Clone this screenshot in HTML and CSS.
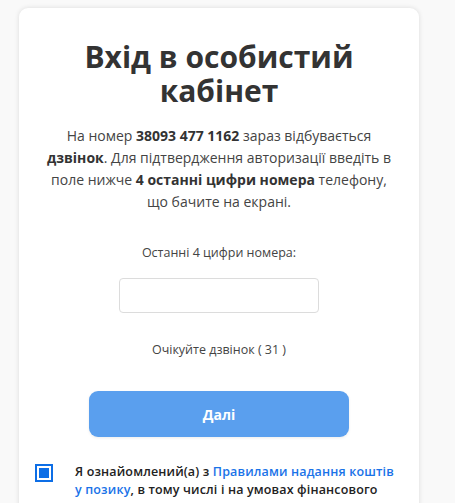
FILE: index.html
```html
<!DOCTYPE html>
<html lang="uk">
<head>
<meta charset="utf-8">
<link rel="stylesheet" href="styles.css">
</head>
<body>
<div class="card">
  <h1 class="title">Вхід в особистий кабінет</h1>
  <p class="info">На номер <b>38093 477 1162</b> зараз відбувається <b>дзвінок</b>. Для підтвердження авторизації введіть в поле нижче <b>4 останні цифри номера</b> телефону, що бачите на екрані.</p>
  <label class="field-label" for="code">Останні 4 цифри номера:</label>
  <input class="code-input" id="code" type="text">
  <p class="wait">Очікуйте дзвінок ( 31 )</p>
  <button class="btn" type="button">Далі</button>
  <div class="agree">
    <span class="check"><span class="check-inner"></span></span>
    <p class="agree-text">Я ознайомлений(а) з <a href="#">Правилами надання коштів у позику</a>, в тому числі і на умовах фінансового кредиту, та погоджуюся з ними</p>
  </div>
</div>
</body>
</html>
```
FILE: styles.css
```css
html, body {
  margin: 0;
  padding: 0;
  background: #f9f9f9;
  overflow: hidden;
}
body {
  font-family: "Open Sans", "DejaVu Sans", sans-serif;
  color: #3a3a3a;
  padding: 8px 0 0 19px;
}
.card {
  width: 400px;
  box-sizing: border-box;
  background: #fff;
  border-radius: 9px;
  box-shadow: 0 0 5px rgba(0,0,0,0.12);
  padding: 32px 0 40px;
  display: flex;
  flex-direction: column;
  align-items: center;
}
.title {
  margin: 0;
  width: 300px;
  text-align: center;
  font-size: 30px;
  line-height: 34px;
  font-weight: 700;
  color: #333;
}
.info {
  margin: 17px 0 0;
  width: 346px;
  text-align: center;
  font-size: 14px;
  line-height: 22px;
  color: #444;
}
.info b {
  font-weight: 700;
  color: #333;
}
.field-label {
  margin-top: 31px;
  font-size: 12.5px;
  line-height: 18px;
  color: #444;
}
.code-input {
  margin-top: 16px;
  width: 200px;
  height: 35px;
  box-sizing: border-box;
  border: 1px solid #dcdcdc;
  border-radius: 4px;
  background: #fff;
  outline: none;
}
.wait {
  margin: 28px 0 0;
  font-size: 12.5px;
  line-height: 18px;
  color: #444;
}
.btn {
  margin-top: 32px;
  width: 260px;
  height: 46px;
  border: none;
  border-radius: 9px;
  background: #5a9fee;
  color: #fff;
  font-family: inherit;
  font-size: 14px;
  font-weight: 700;
  box-shadow: 0 1px 3px rgba(0,0,0,0.08);
}
.agree {
  margin-top: 26px;
  align-self: stretch;
  padding: 0 24px 0 16px;
  display: flex;
  gap: 22px;
  align-items: flex-start;
}
.check {
  flex: none;
  width: 18px;
  height: 18px;
  box-sizing: border-box;
  border: 2.5px solid #0d6ee6;
  padding: 2px;
  margin-top: 1px;
}
.check-inner {
  display: block;
  width: 100%;
  height: 100%;
  background: #0d6ee6;
}
.agree-text {
  margin: 0;
  font-size: 12.5px;
  line-height: 18px;
  letter-spacing: 0.15px;
  font-weight: 600;
  color: #222;
}
.agree-text a {
  color: #1a73e8;
  text-decoration: none;
}
```
